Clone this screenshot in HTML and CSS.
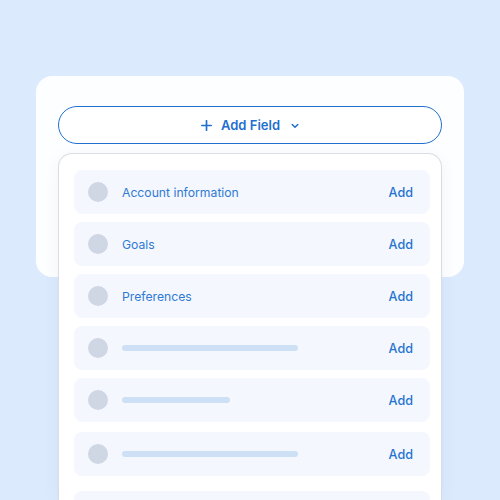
FILE: index.html
```html
<!DOCTYPE html>
<html>
<head>
<meta charset="utf-8">
<link rel="stylesheet" href="styles.css">
</head>
<body>
<div class="stage">
  <div class="card">
    <button class="add-btn">
      <svg class="plus" width="11" height="11" viewBox="0 0 11 11"><path d="M5.5 0.8v9.4M0.8 5.5h9.4" stroke="currentColor" stroke-width="1.7" stroke-linecap="round"/></svg>
      <span>Add Field</span>
      <svg class="chev" width="8" height="6" viewBox="0 0 8 6"><path d="M1.2 1.5l2.8 2.8 2.8-2.8" fill="none" stroke="currentColor" stroke-width="1.5" stroke-linecap="round" stroke-linejoin="round"/></svg>
    </button>
    <div class="menu">
      <div class="row"><span class="dot"></span><span class="label">Account information</span><span class="add">Add</span></div>
      <div class="row"><span class="dot"></span><span class="label">Goals</span><span class="add">Add</span></div>
      <div class="row"><span class="dot"></span><span class="label">Preferences</span><span class="add">Add</span></div>
      <div class="row"><span class="dot"></span><span class="bar bar-long"></span><span class="add">Add</span></div>
      <div class="row"><span class="dot"></span><span class="bar bar-short"></span><span class="add">Add</span></div>
      <div class="row row-gap2"><span class="dot"></span><span class="bar bar-long"></span><span class="add">Add</span></div>
      <div class="row row-gap3"></div>
    </div>
  </div>
</div>
</body>
</html>
```
FILE: styles.css
```css
* { box-sizing: border-box; }
html, body { margin: 0; height: 100%; overflow: hidden; }
body {
  background: #dceafd;
  font-family: Inter, "Noto Sans", sans-serif;
}
.stage {
  padding-top: 76px;
  display: flex;
  justify-content: center;
}
.card {
  position: relative;
  width: 428px;
  height: 201px;
  background: #fdfeff;
  border-radius: 16px;
  padding: 30px 22px 0;
}
.add-btn {
  width: 100%;
  height: 38px;
  border: 1.7px solid #2170d0;
  border-radius: 19px;
  background: #fff;
  color: #1f6fcf;
  font-family: inherit;
  font-size: 13px;
  font-weight: 600;
  display: flex;
  align-items: center;
  justify-content: center;
  padding: 0;
}
.add-btn .plus { margin-right: 9px; }
.add-btn .chev { margin-left: 11px; margin-top: 1px; }
.menu {
  position: absolute;
  top: 77px;
  left: 22px;
  width: 384px;
  height: 347px;
  overflow: hidden;
  background: #fff;
  border: 1px solid #d9dde5;
  border-bottom: none;
  border-radius: 14px 14px 0 0;
  box-shadow: 0 4px 16px rgba(40, 70, 120, 0.06);
  padding: 16px 11px 0 15px;
  display: flex;
  flex-direction: column;
  gap: 8px;
}
.row {
  flex: none;
  height: 44px;
  background: #f4f7fd;
  border-radius: 8px;
  display: flex;
  align-items: center;
  padding: 0 17px 0 14px;
}
.row-gap2 { margin-top: 2px; }
.row-gap3 { margin-top: 7px; }
.dot {
  flex: none;
  width: 20px;
  height: 20px;
  border-radius: 50%;
  background: #cfd6e4;
  margin-right: 14px;
}
.label {
  flex: 1;
  font-size: 12.2px;
  color: #2f7ad4;
}
.bar {
  height: 6px;
  border-radius: 3px;
  background: #cde0f6;
}
.bar-long { width: 176px; }
.bar-short { width: 108px; }
.add {
  margin-left: auto;
  font-size: 12.6px;
  font-weight: 500;
  color: #2473d1;
}
```
